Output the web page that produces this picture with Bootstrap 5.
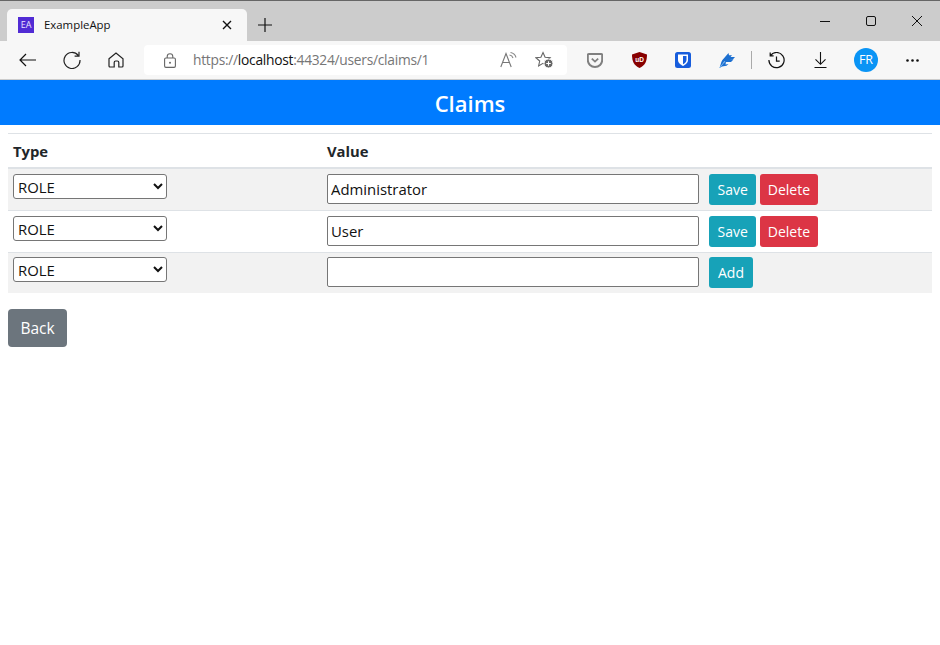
<!DOCTYPE html>
<html lang="en">
<head>
<meta charset="utf-8">
<title>ExampleApp</title>
<link href="https://cdn.jsdelivr.net/npm/bootstrap@5.3.0/dist/css/bootstrap.min.css" rel="stylesheet">
<style>
html,body{margin:0;height:100%;overflow:hidden;background:#fff}
body{font-family:"Open Sans","Noto Sans","Liberation Sans",sans-serif;font-size:15px;color:#212529}
.chrome-top{height:41px;background:#ccc;border-top:1px solid #666}
.tab-item{width:240px;height:32px;margin-top:8px;margin-left:7px;background:#f7f7f7;border-radius:5px 5px 0 0;padding:0 11px;font-size:11.4px;color:#111}
.fav-icon{width:16px;height:16px;background:#512bd4;color:#e8e2ff;font-size:9px;line-height:16px;text-align:center;margin-right:10px;flex:none}
.win-btn{width:46px;height:40px}
.new-tab{width:36px;height:32px;margin-top:8px}
.tool-bar{height:39px;background:#f7f7f7;border-bottom:1px solid #ccc;padding-left:6px}
.tool-btn{width:44px;height:38px;flex:none}
.tool-btn-push{margin-left:2px}
.addr-bar{width:423px;height:30px;background:#fff;border-radius:4px;margin:0 6px;flex:none;padding:0 13px 0 20px;font-size:13.8px;color:#767676;letter-spacing:-.02em}
.addr-bar b{font-weight:400;color:#111}
.lock-gap{margin-right:17px}
.read-gap{margin-right:18px}
.tool-sep{width:1px;height:18px;background:#aaa;margin:0 2px 0 2px;flex:none}
.avatar-dot{width:24px;height:24px;border-radius:50%;background:#0a94f5;color:#fff;font-size:12.5px;line-height:24px;text-align:center}
.page-title{height:45px;background:#007bff;color:#fff;font-size:22px;font-weight:600;line-height:47px;text-align:center}
.page-body{padding:8px}
.rule-line{margin:0;border:0;border-top:1px solid #dee2e6;opacity:1;height:0}
.claims-table{table-layout:fixed;width:100%;margin:0;border-collapse:collapse}
.claims-table th{height:34px;padding:2px 5px 0;font-size:14.8px;font-weight:700;border-bottom:2px solid #dee2e6;color:#212529;vertical-align:middle}
.claims-table td{padding:0 5px;border-bottom:1px solid #dee2e6;vertical-align:top;height:42px;background:#fff}
.claims-table tr.odd-row td{background:#f2f2f2}
.claims-table tr:last-child td{border-bottom:0;height:41px}
.col-type{width:314px}
.col-value{width:382px}
.type-select{width:154px;height:25px;font:14.9px "Open Sans","Noto Sans",sans-serif;color:#111;border:1px solid #767676;border-radius:3px;background:#fff;margin-top:5px;padding:1px 0 0 0;display:block}
.tight-select{margin-top:4px}
.val-input{width:372px;height:30px;font:14.9px "Open Sans","Noto Sans",sans-serif;color:#111;border:1px solid #767676;border-radius:2px;background:#fff;margin-top:5px;padding:0 3px;display:block}
.tight-input{margin-top:4px}
.act-btn{font-size:14px;line-height:21px;padding:5px 8.5px;margin:5px 4px 0 0;height:31px;border-radius:3px;border:0;color:#fff;--bs-btn-border-width:0}
.tight-btn{margin-top:4px;padding:5px 9px}
.btn-teal{background:#17a2b8}
.btn-teal:hover{background:#17a2b8;color:#fff}
.btn-red{background:#dc3545;padding:5px 7.5px;font-size:14px}
.btn-red:hover{background:#dc3545;color:#fff}
.back-btn{margin-top:16px;height:38px;width:59px;padding:0;background:#6c757d;border:0;border-radius:4px;color:#fff;font-size:15.5px;line-height:39px}
.back-btn:hover{background:#6c757d;color:#fff}
svg{display:block}
</style>
</head>
<body>
<div class="chrome-top d-flex">
  <div class="tab-item d-flex align-items-center">
    <span class="fav-icon">EA</span><span class="flex-grow-1">ExampleApp</span>
    <svg width="10" height="10" viewBox="0 0 10 10" class="me-1"><path d="M1 1l8 8M9 1l-8 8" stroke="#111" stroke-width="1.4" fill="none"/></svg>
  </div>
  <div class="new-tab d-flex align-items-center justify-content-center">
    <svg width="14" height="14" viewBox="0 0 14 14"><path d="M7 0v14M0 7h14" stroke="#111" stroke-width="1.2" fill="none"/></svg>
  </div>
  <div class="ms-auto d-flex me-0">
    <div class="win-btn d-flex align-items-center justify-content-center"><svg width="10" height="10" viewBox="0 0 10 10"><path d="M0 5.500h10" stroke="#111" fill="none"/></svg></div>
    <div class="win-btn d-flex align-items-center justify-content-center"><svg width="10" height="10" viewBox="0 0 10 10"><rect x=".5" y=".5" width="9" height="9" rx="1.500" stroke="#111" fill="none"/></svg></div>
    <div class="win-btn d-flex align-items-center justify-content-center"><svg width="10" height="10" viewBox="0 0 10 10"><path d="M0 0l10 10M10 0L0 10" stroke="#111" fill="none"/></svg></div>
  </div>
</div>
<div class="tool-bar d-flex align-items-center">
  <div class="tool-btn d-flex align-items-center justify-content-center"><svg width="18" height="14" viewBox="0 0 18 14"><path d="M17 7H1M7 1L1 7l6 6" stroke="#111" stroke-width="1.2" fill="none"/></svg></div>
  <div class="tool-btn d-flex align-items-center justify-content-center"><svg width="18" height="18" viewBox="0 0 18 18"><path d="M15.200 4.400A8 8 0 1 0 17 9M16 .8v4.400h-4.400" stroke="#222" stroke-width="1.2" fill="none"/></svg></div>
  <div class="tool-btn d-flex align-items-center justify-content-center"><svg width="16" height="16" viewBox="0 0 16 16"><path d="M1 6.800L8 1l7 5.800V14a1 1 0 0 1-1 1h-3.200V10.500a1.500 1.500 0 0 0-1.500-1.500H7.700a1.500 1.500 0 0 0-1.500 1.500V15H2a1 1 0 0 1-1-1z" stroke="#222" stroke-width="1.200" fill="none"/></svg></div>
  <div class="addr-bar d-flex align-items-center">
    <svg width="12" height="15" viewBox="0 0 12 15" class="lock-gap"><path d="M3.200 5V3.500a2.800 2.800 0 0 1 5.600 0V5" stroke="#666" stroke-width="1.100" fill="none"/><rect x=".6" y="5" width="10.800" height="9.400" rx="1.300" stroke="#666" stroke-width="1.100" fill="none"/><circle cx="6" cy="9.700" r="1" fill="#666"/></svg>
    <span class="flex-grow-1">https://<b>localhost</b>:44324/users/claims/1</span>
    <svg width="17" height="16" viewBox="0 0 17 16" class="read-gap"><path d="M.8 15L6 1.500 11.200 15M2.500 10.500h7" stroke="#777" stroke-width="1.100" fill="none"/><path d="M9.500 3a4.500 4.500 0 0 1 3.500 3M10.500 .5a7 7 0 0 1 5.500 5" stroke="#888" stroke-width="1.100" fill="none"/></svg>
    <svg width="19" height="18" viewBox="0 0 19 18"><path d="M8 1.500l2.100 4.700 5 .5-3.800 3.300 1.100 5-4.400-2.600-4.400 2.600 1.100-5L.9 6.700l5-.5z" stroke="#666" stroke-width="1.100" fill="none"/><circle cx="13.500" cy="12.500" r="4.500" fill="#666" stroke="#fff"/><path d="M13.500 10.200v4.600M11.200 12.500h4.600" stroke="#fff" stroke-width="1.100"/></svg>
  </div>
  <div class="tool-btn d-flex align-items-center justify-content-center"><svg width="16" height="15" viewBox="0 0 16 15"><path d="M1.800 1h12.400a1 1 0 0 1 1 1v5a7.200 7 0 0 1-14.400 0V2a1 1 0 0 1 1-1z" fill="#f7f7f7" stroke="#808080" stroke-width="2"/><path d="M4.800 5.600L8 8.600l3.200-3" stroke="#808080" stroke-width="1.800" fill="none"/></svg></div>
  <div class="tool-btn d-flex align-items-center justify-content-center"><svg width="15" height="16" viewBox="0 0 15 16"><path d="M7.500 0L15 2.500c0 7-2 11-7.500 13.500C2 13.500 0 9.500 0 2.500z" fill="#800"/><text x="7.500" y="10" font-size="6.500" font-weight="700" fill="#fff" text-anchor="middle" font-family="Liberation Sans">uD</text></svg></div>
  <div class="tool-btn d-flex align-items-center justify-content-center"><svg width="16" height="16" viewBox="0 0 16 16"><rect width="16" height="16" rx="2.500" fill="#175ddc"/><path d="M3 2.500h10v5.500c0 3-2.500 4.500-5 6-2.500-1.500-5-3-5-6z" fill="#fff"/><path d="M8 4h3.500v4c0 2-1.700 3.200-3.500 4.200z" fill="#175ddc"/></svg></div>
  <div class="tool-btn d-flex align-items-center justify-content-center"><svg width="16" height="16" viewBox="0 0 16 16"><path d="M.5 16L2.500 9.500 5 7 4.500 10.500 7 10l-.5 2.500 3-.5-2 1.800L3 14.500z" fill="#1c6fd0"/><path d="M3 8.500L9.500 1 10 3.200h3L11.500 5H16l-2 2.300H10.500l4 .3L12 10H7.500L5 10.500z" fill="#1c6fd0"/><path d="M.5 16L6 9" stroke="#8fc4f5" stroke-width=".8"/></svg></div>
  <div class="tool-sep"></div>
  <div class="tool-btn d-flex align-items-center justify-content-center"><svg width="17" height="17" viewBox="0 0 17 17"><path d="M2.600 3.300A7.600 7.600 0 1 1 .9 8M2.200.5v3.300h3.400" stroke="#111" stroke-width="1.200" fill="none"/><path d="M8.500 4.500v4.600h3.200" stroke="#111" stroke-width="1.200" fill="none"/></svg></div>
  <div class="tool-btn d-flex align-items-center justify-content-center"><svg width="13" height="16" viewBox="0 0 13 16"><path d="M6.500 0v12M1.500 7.300l5 5 5-5M.5 15.500h12" stroke="#111" stroke-width="1.100" fill="none"/></svg></div>
  <div class="tool-btn d-flex align-items-center justify-content-center tool-btn-push"><span class="avatar-dot">FR</span></div>
  <div class="tool-btn d-flex align-items-center justify-content-center tool-btn-push"><svg width="13" height="3" viewBox="0 0 13 3"><circle cx="1.500" cy="1.500" r="1.300" fill="#111"/><circle cx="6.500" cy="1.500" r="1.300" fill="#111"/><circle cx="11.500" cy="1.500" r="1.300" fill="#111"/></svg></div>
</div>
<div class="page-title">Claims</div>
<div class="page-body">
  <hr class="rule-line">
  <table class="claims-table">
    <colgroup><col class="col-type"><col class="col-value"><col></colgroup>
    <thead><tr><th>Type</th><th>Value</th><th></th></tr></thead>
    <tbody>
      <tr class="odd-row">
        <td><select class="type-select"><option>ROLE</option></select></td>
        <td><input class="val-input" value="Administrator"></td>
        <td><button class="btn act-btn btn-teal">Save</button><button class="btn act-btn btn-red">Delete</button></td>
      </tr>
      <tr>
        <td><select class="type-select"><option>ROLE</option></select></td>
        <td><input class="val-input" value="User"></td>
        <td><button class="btn act-btn btn-teal">Save</button><button class="btn act-btn btn-red">Delete</button></td>
      </tr>
      <tr class="odd-row">
        <td><select class="type-select tight-select"><option>ROLE</option></select></td>
        <td><input class="val-input tight-input" value=""></td>
        <td><button class="btn act-btn btn-teal tight-btn">Add</button></td>
      </tr>
    </tbody>
  </table>
  <a href="#" class="btn back-btn">Back</a>
</div>
</body>
</html>
